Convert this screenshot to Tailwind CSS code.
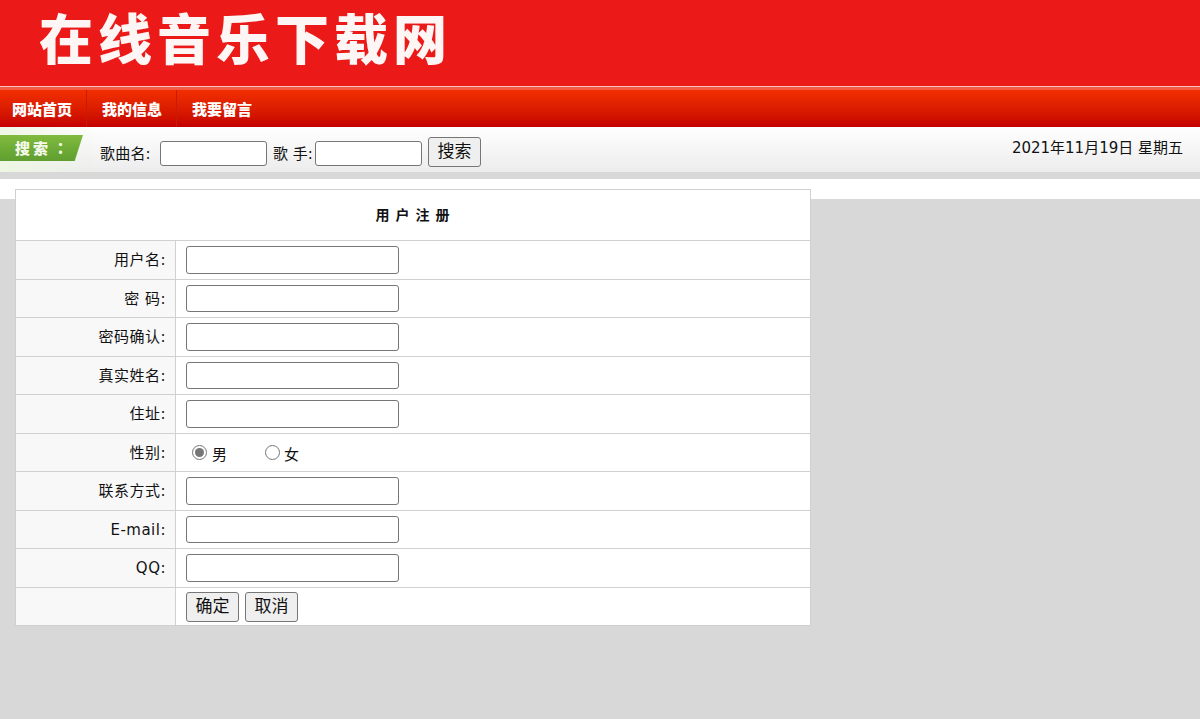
<!DOCTYPE html>
<html lang="zh">
<head>
<meta charset="utf-8">
<script src="https://cdn.jsdelivr.net/npm/@tailwindcss/browser@4"></script>
<title>在线音乐下载网</title>
</head>
<body class="bg-[#d8d8d8] h-[719px] overflow-hidden font-['DejaVu_Sans','Noto_Sans_CJK_SC',sans-serif] text-[15px] text-[#111]">
<header class="h-[86px] bg-[#eb1917] pl-[39px] flex items-center">
  <span class="text-[#fdf6f5] font-black text-[54px] leading-[66px] tracking-[5px] font-['Noto_Sans_CJK_SC',sans-serif] -mt-[13px]">在线音乐下载网</span>
</header>
<div class="h-px bg-[#f8c4c0]"></div>
<div class="h-[3px] bg-[#f25a45]"></div>
<nav class="h-[37px] flex bg-gradient-to-b from-[#f22f00] to-[#c50000] text-white font-black text-[15px] font-['Noto_Sans_CJK_SC',sans-serif]">
  <a class="w-[87px] pl-[12px] pt-[2px] flex items-center border-r border-[#c81a08]">网站首页</a>
  <a class="w-[90px] pl-[15px] pt-[2px] flex items-center border-r border-[#c81a08]">我的信息</a>
  <a class="pl-[15px] pt-[2px] flex items-center">我要留言</a>
</nav>
<section class="relative h-[45px] bg-gradient-to-b from-white to-[#ececec] flex items-start">
  <div class="absolute left-0 top-0 bottom-0 w-[100px] bg-gradient-to-r from-[#eef6e4] to-transparent"></div>
  <div class="relative mt-[8px] w-[83px] h-[26px] bg-gradient-to-b from-[#80bb3e] to-[#5f9e30] [clip-path:polygon(0_0,100%_0,90%_100%,0_100%)] pl-[15px] flex items-center text-[#f4f8ea] font-black text-[15px] font-['Noto_Sans_CJK_SC',sans-serif] tracking-[3px]">搜索<span class="ml-[2px] font-['Noto_Sans_CJK_TC',sans-serif]">：</span></div>
  <form class="relative ml-[17px] mt-[10px] flex items-center h-[30px]">
    <label class="w-[60px] mt-[4px] whitespace-nowrap tracking-[0.2px]">歌曲名:</label>
    <input class="w-[107px] h-[25px] mt-[2px] bg-white border border-[#767676] rounded-[3px]" type="text">
    <label class="ml-[6px] w-[42px] mt-[4px] whitespace-nowrap">歌 手:</label>
    <input class="w-[107px] h-[25px] mt-[2px] bg-white border border-[#767676] rounded-[3px]" type="text">
    <button class="ml-[6px] w-[53px] h-[30px] bg-[#efefef] border border-[#767676] rounded-[3px] text-[17px]" type="button">搜索</button>
  </form>
  <div class="absolute right-[17px] top-[11px] leading-[20px]">2021年11月19日 星期五</div>
</section>
<div class="h-[7px] bg-[#d8d8d8]"></div>
<div class="h-[20px] bg-white"></div>
<main class="-mt-[10px] ml-[15px] w-[796px] relative bg-white border border-[#d0d0d0]">
  <div class="h-[50px] pb-[2px] pl-[5px] flex items-center justify-center font-bold text-[14px] tracking-[6px] font-['Noto_Sans_CJK_SC',sans-serif]">用户注册</div>
  <div class="h-[39px] flex border-t border-[#d0d0d0]">
    <label class="w-[160px] bg-[#f8f8f8] border-r border-[#d0d0d0] flex items-center justify-end pr-[9px] pt-[1px] tracking-[0.5px]">用户名:</label>
    <div class="pl-[10px] flex items-center"><input class="w-[213px] h-[28px] bg-white border border-[#767676] rounded-[3px]" type="text"></div>
  </div>
  <div class="h-[38px] flex border-t border-[#d0d0d0]">
    <label class="w-[160px] bg-[#f8f8f8] border-r border-[#d0d0d0] flex items-center justify-end pr-[9px] pt-[1px] tracking-[0.5px]">密 码:</label>
    <div class="pl-[10px] flex items-center"><input class="w-[213px] h-[27px] bg-white border border-[#767676] rounded-[3px]" type="password"></div>
  </div>
  <div class="h-[39px] flex border-t border-[#d0d0d0]">
    <label class="w-[160px] bg-[#f8f8f8] border-r border-[#d0d0d0] flex items-center justify-end pr-[9px] pt-[1px] tracking-[0.5px]">密码确认:</label>
    <div class="pl-[10px] flex items-center"><input class="w-[213px] h-[28px] bg-white border border-[#767676] rounded-[3px]" type="password"></div>
  </div>
  <div class="h-[38px] flex border-t border-[#d0d0d0]">
    <label class="w-[160px] bg-[#f8f8f8] border-r border-[#d0d0d0] flex items-center justify-end pr-[9px] pt-[1px] tracking-[0.5px]">真实姓名:</label>
    <div class="pl-[10px] flex items-center"><input class="w-[213px] h-[27px] bg-white border border-[#767676] rounded-[3px]" type="text"></div>
  </div>
  <div class="h-[39px] flex border-t border-[#d0d0d0]">
    <label class="w-[160px] bg-[#f8f8f8] border-r border-[#d0d0d0] flex items-center justify-end pr-[9px] pt-[1px] tracking-[0.5px]">住址:</label>
    <div class="pl-[10px] flex items-center"><input class="w-[213px] h-[28px] bg-white border border-[#767676] rounded-[3px]" type="text"></div>
  </div>
  <div class="h-[38px] flex border-t border-[#d0d0d0]">
    <label class="w-[160px] bg-[#f8f8f8] border-r border-[#d0d0d0] flex items-center justify-end pr-[9px] pt-[1px] tracking-[0.5px]">性别:</label>
    <div class="pl-[16px] flex items-center">
      <input class="w-[15px] h-[15px] m-0 accent-[#767676]" type="radio" name="sex" checked>
      <span class="ml-[5px] mr-[38px] mt-[6px]">男</span>
      <input class="w-[15px] h-[15px] m-0 accent-[#767676]" type="radio" name="sex">
      <span class="ml-[4px] mt-[6px]">女</span>
    </div>
  </div>
  <div class="h-[39px] flex border-t border-[#d0d0d0]">
    <label class="w-[160px] bg-[#f8f8f8] border-r border-[#d0d0d0] flex items-center justify-end pr-[9px] pt-[1px] tracking-[0.5px]">联系方式:</label>
    <div class="pl-[10px] flex items-center"><input class="w-[213px] h-[28px] bg-white border border-[#767676] rounded-[3px]" type="text"></div>
  </div>
  <div class="h-[38px] flex border-t border-[#d0d0d0]">
    <label class="w-[160px] bg-[#f8f8f8] border-r border-[#d0d0d0] flex items-center justify-end pr-[9px] pt-[1px] tracking-[0.5px]">E-mail:</label>
    <div class="pl-[10px] flex items-center"><input class="w-[213px] h-[27px] bg-white border border-[#767676] rounded-[3px]" type="text"></div>
  </div>
  <div class="h-[39px] flex border-t border-[#d0d0d0]">
    <label class="w-[160px] bg-[#f8f8f8] border-r border-[#d0d0d0] flex items-center justify-end pr-[9px] pt-[1px] tracking-[0.5px]">QQ:</label>
    <div class="pl-[10px] flex items-center"><input class="w-[213px] h-[28px] bg-white border border-[#767676] rounded-[3px]" type="text"></div>
  </div>
  <div class="h-[38px] flex border-t border-[#d0d0d0]">
    <div class="w-[160px] bg-[#f8f8f8] border-r border-[#d0d0d0]"></div>
    <div class="pl-[10px] flex items-center gap-[6px]">
      <button class="w-[53px] h-[30px] bg-[#efefef] border border-[#767676] rounded-[3px] text-[17px]" type="button">确定</button>
      <button class="w-[53px] h-[30px] bg-[#efefef] border border-[#767676] rounded-[3px] text-[17px]" type="button">取消</button>
    </div>
  </div>
</main>
</body>
</html>
